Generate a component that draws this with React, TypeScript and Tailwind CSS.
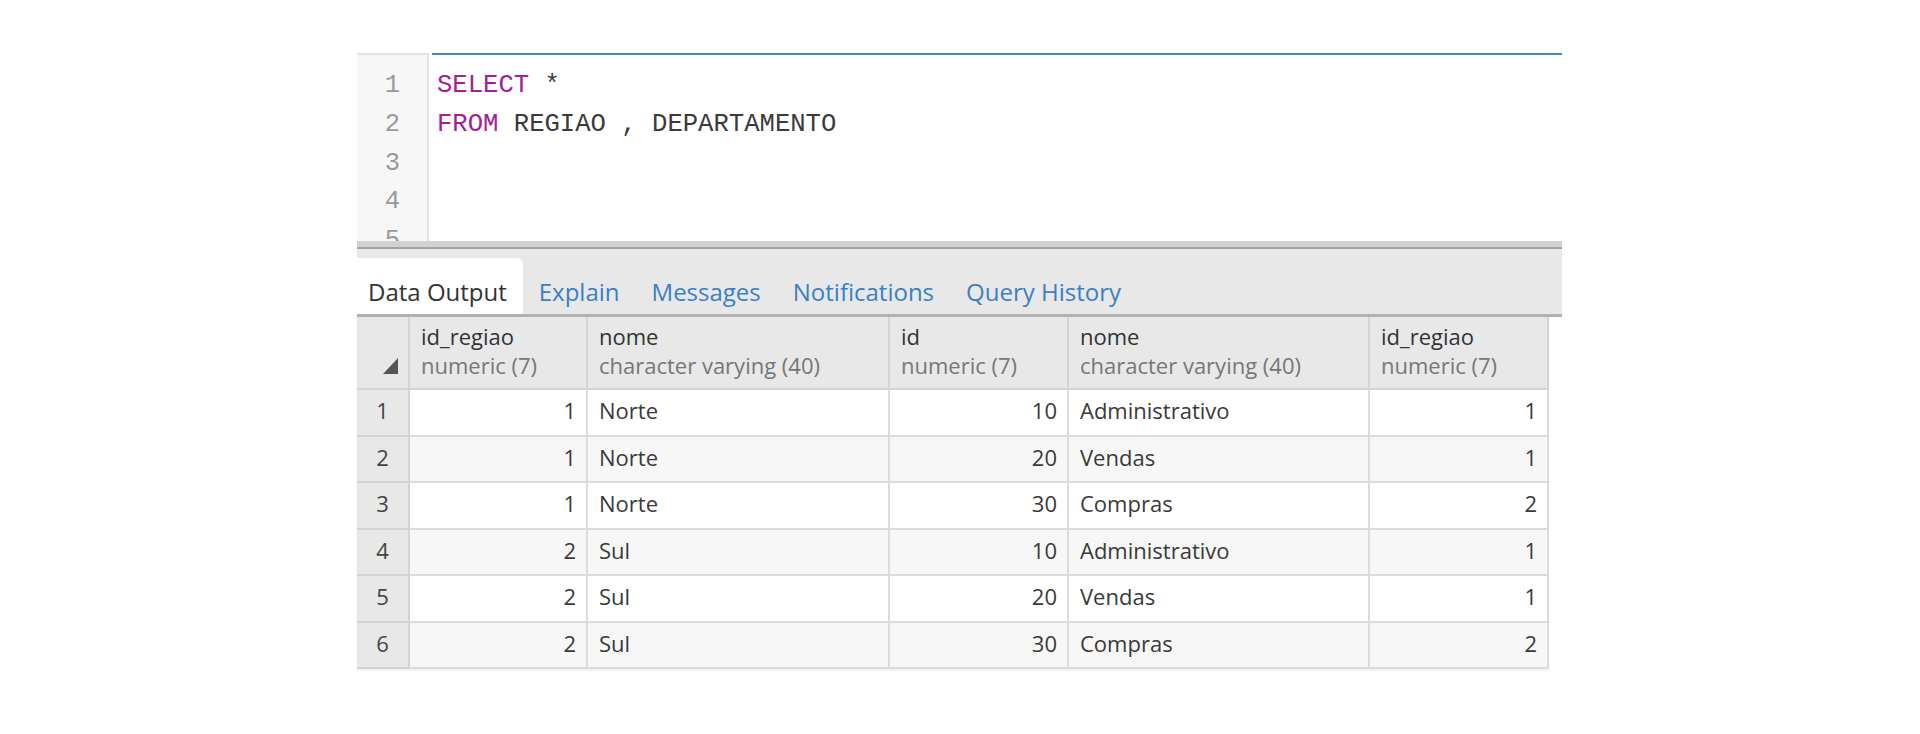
import React from 'react';

const rows: [number, string, number, string, number][] = [
  [1, 'Norte', 10, 'Administrativo', 1],
  [1, 'Norte', 20, 'Vendas', 1],
  [1, 'Norte', 30, 'Compras', 2],
  [2, 'Sul', 10, 'Administrativo', 1],
  [2, 'Sul', 20, 'Vendas', 1],
  [2, 'Sul', 30, 'Compras', 2],
];

const columns = [
  { name: 'id_regiao', type: 'numeric (7)' },
  { name: 'nome', type: 'character varying (40)' },
  { name: 'id', type: 'numeric (7)' },
  { name: 'nome', type: 'character varying (40)' },
  { name: 'id_regiao', type: 'numeric (7)' },
];

const tabs = ['Explain', 'Messages', 'Notifications', 'Query History'];

export default function App() {
  return (
    <div className="w-full h-[734px] bg-white overflow-hidden">
      <div className="ml-[357px] w-[1205px] pt-[53px]">
        {/* query editor */}
        <div className="flex h-[188px] overflow-hidden font-['Liberation_Mono',monospace] text-[25.6px] leading-[38.8px]">
          <div className="w-[72px] shrink-0 bg-[#f7f7f7] border-t-2 border-t-[#e2e2e2] border-r-2 border-r-[#e3e3e3] pt-[12px] pr-[27px] text-right text-[#9a9a9a]">
            {[1, 2, 3, 4, 5].map((n) => (
              <div key={n}>{n}</div>
            ))}
          </div>
          <div className="flex-1 ml-[3px] border-t-2 border-t-[#4a86c5] pt-[12px] pl-[5px] text-[#3a3a3a]">
            <div>
              <span className="text-[#a0209a]">SELECT</span> *
            </div>
            <div>
              <span className="text-[#a0209a]">FROM</span> REGIAO , DEPARTAMENTO
            </div>
          </div>
        </div>

        {/* splitter */}
        <div className="h-[8px] bg-[#d2d2d2] border-b-2 border-b-[#a3a3a3]" />

        {/* tabs */}
        <div className="h-[68px] bg-[#e8e8e8] border-b-[3px] border-b-[#b2b2b2] pt-[9px] flex font-['Open_Sans',sans-serif] text-[24px] leading-[32px]">
          <div className="h-[56px] bg-white rounded-tr-[6px] pl-[11px] pr-4 flex items-end pb-[6px] text-[#333]">
            Data Output
          </div>
          {tabs.map((t) => (
            <div key={t} className="h-[56px] px-4 flex items-end pb-[6px] text-[#3b80c3]">
              {t}
            </div>
          ))}
        </div>

        {/* results grid */}
        <div className="w-[1192px] grid grid-cols-[53px_178px_302px_179px_301px_179px] font-['Open_Sans',sans-serif] text-[22px] text-[#3a3a3a] shadow-[0_2px_2px_rgba(0,0,0,0.06)]">
          <div className="h-[73px] bg-[#e8e8e8] border-r-2 border-b-2 border-[#d4d4d4] flex items-end justify-end pr-[10px] pb-[14px]">
            <svg width="15" height="16" viewBox="0 0 15 16">
              <polygon points="15,0 15,16 0,16" fill="#555" />
            </svg>
          </div>
          {columns.map((c, i) => (
            <div
              key={i}
              className="h-[73px] bg-[#e8e8e8] border-r-2 border-b-2 border-[#d4d4d4] pl-[11px] pt-[5px] leading-[29px]"
            >
              <div className="text-[#333]">{c.name}</div>
              <div className="text-[#777]">{c.type}</div>
            </div>
          ))}
          {rows.map((r, i) => {
            const bg = i % 2 === 0 ? 'bg-white' : 'bg-[#f7f7f7]';
            return (
              <React.Fragment key={i}>
                <div className="h-[46.5px] bg-[#e8e8e8] border-r-2 border-b-2 border-[#d4d4d4] flex items-center justify-center pb-[3px] text-[#444]">
                  {i + 1}
                </div>
                <div className={`h-[46.5px] ${bg} border-r-2 border-b-2 border-[#dcdcdc] flex items-center justify-end pr-[10px] pb-[3px]`}>
                  {r[0]}
                </div>
                <div className={`h-[46.5px] ${bg} border-r-2 border-b-2 border-[#dcdcdc] flex items-center pl-[11px] pb-[3px]`}>
                  {r[1]}
                </div>
                <div className={`h-[46.5px] ${bg} border-r-2 border-b-2 border-[#dcdcdc] flex items-center justify-end pr-[10px] pb-[3px]`}>
                  {r[2]}
                </div>
                <div className={`h-[46.5px] ${bg} border-r-2 border-b-2 border-[#dcdcdc] flex items-center pl-[11px] pb-[3px]`}>
                  {r[3]}
                </div>
                <div className={`h-[46.5px] ${bg} border-r-2 border-b-2 border-[#dcdcdc] flex items-center justify-end pr-[10px] pb-[3px]`}>
                  {r[4]}
                </div>
              </React.Fragment>
            );
          })}
        </div>
      </div>
    </div>
  );
}
